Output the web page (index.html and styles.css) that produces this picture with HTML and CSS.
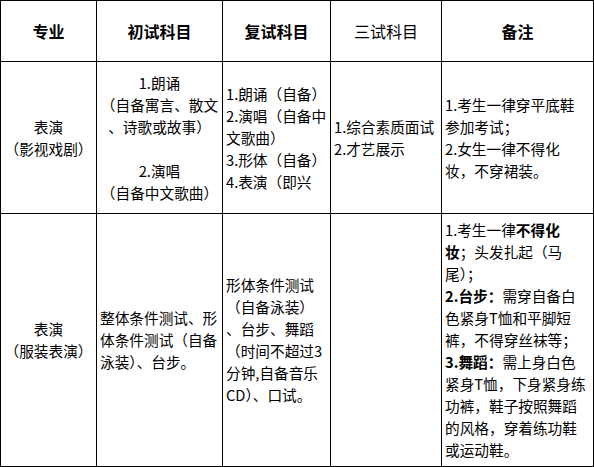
FILE: index.html
```html
<!DOCTYPE html>
<html lang="zh-CN">
<head>
<meta charset="utf-8">
<title>考试科目</title>
<link rel="stylesheet" href="styles.css">
</head>
<body>
<div class="sheet">
  <div class="cell head"><p>专业</p></div>
  <div class="cell head"><p>初试科目</p></div>
  <div class="cell head"><p>复试科目</p></div>
  <div class="cell head light"><p>三试科目</p></div>
  <div class="cell head"><p>备注</p></div>

  <div class="cell center"><p>表演<br>（影视戏剧）</p></div>
  <div class="cell center"><p>1.朗诵<br>（自备寓言、散文<br>、诗歌或故事）<br>&nbsp;<br>2.演唱<br>（自备中文歌曲）</p></div>
  <div class="cell"><p>1.朗诵（自备）<br>2.演唱（自备中<br>文歌曲）<br>3.形体（自备）<br>4.表演（即兴</p></div>
  <div class="cell"><p>1.综合素质面试<br>2.才艺展示</p></div>
  <div class="cell"><p>1.考生一律穿平底鞋<br>参加考试；<br>2.女生一律不得化<br>妆，不穿裙装。</p></div>

  <div class="cell center"><p>表演<br>（服装表演）</p></div>
  <div class="cell"><p>整体条件测试、形<br>体条件测试（自备<br>泳装）、台步。</p></div>
  <div class="cell"><p>形体条件测试<br>（自备泳装）<br>、台步、舞蹈<br>（时间不超过3<br>分钟,自备音乐<br>CD）、口试。</p></div>
  <div class="cell"><p></p></div>
  <div class="cell"><p>1.考生一律<b>不得化</b><br><b>妆</b>；头发扎起（马<br>尾）；<br><b>2.台步：</b>需穿自备白<br>色紧身T恤和平脚短<br>裤，不得穿丝袜等；<br><b>3.舞蹈：</b>需上身白色<br>紧身T恤，下身紧身练<br>功裤，鞋子按照舞蹈<br>的风格，穿着练功鞋<br>或运动鞋。</p></div>
</div>
</body>
</html>
```

FILE: styles.css
```css
html, body {
  margin: 0;
  padding: 0;
  background: #fff;
}

body {
  font-family: "Noto Sans CJK SC", "Microsoft YaHei", sans-serif;
  font-size: 14.667px;
  color: #000;
}

.sheet {
  display: grid;
  grid-template-columns: 95px 125px 107px 110px 151px;
  grid-template-rows: 60px 151px 252px;
  gap: 1px;
  padding: 1px;
  background: #000;
  width: max-content;
}

.cell {
  background: #fff;
  display: flex;
  flex-direction: column;
  justify-content: center;
  padding: 0 3px;
  line-height: 22px;
  white-space: nowrap;
  overflow: hidden;
}

.cell p {
  margin: 0;
}

.center {
  text-align: center;
}

.head {
  font-size: 16px;
  font-weight: bold;
  text-align: center;
}

.head.light {
  font-weight: normal;
}

b {
  font-weight: bold;
}
```
